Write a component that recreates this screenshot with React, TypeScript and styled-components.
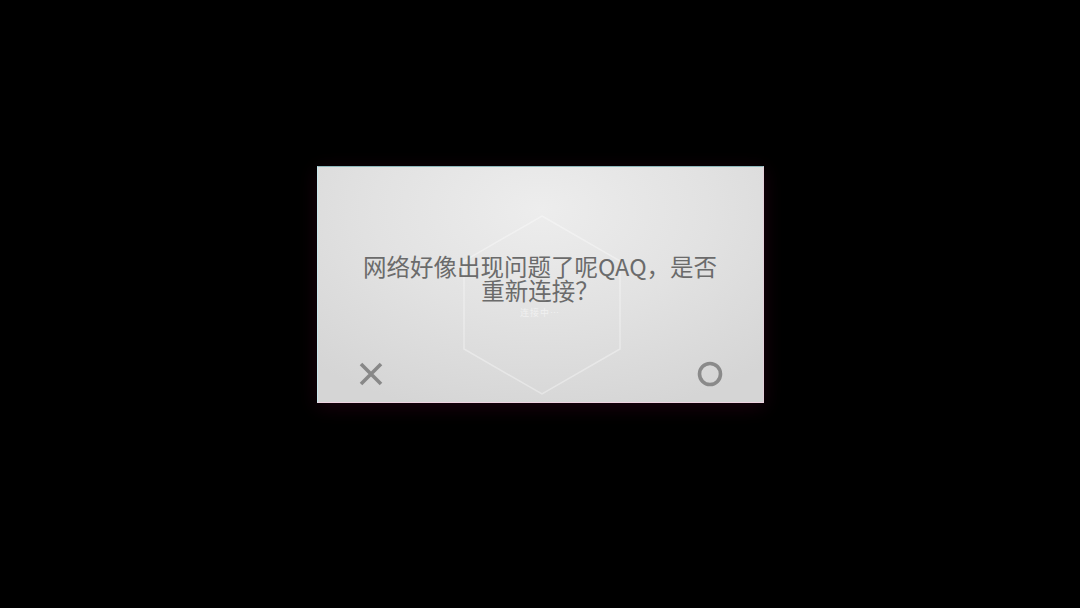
import React from 'react';
import styled, { createGlobalStyle } from 'styled-components';

const GlobalStyle = createGlobalStyle`
  html, body {
    margin: 0;
    padding: 0;
    background: #000000;
  }
  body {
    font-family: "Noto Sans CJK SC", "Noto Sans", sans-serif;
  }
`;

const Screen = styled.div`
  width: 1080px;
  height: 608px;
  background: #000000;
  display: flex;
  flex-direction: column;
  align-items: center;
  padding-top: 166px;
  box-sizing: border-box;
  overflow: hidden;
`;

const Dialog = styled.div`
  position: relative;
  width: 447px;
  height: 237px;
  box-sizing: border-box;
  display: flex;
  flex-direction: column;
  padding: 0 40px 15px 40px;
  background: radial-gradient(ellipse 75% 90% at 50% 18%, #ededed 0%, #e2e2e2 50%, #d5d5d5 100%);
  border-top: 1px solid #8fb8bc;
  border-left: 1px solid #c9e8ee;
  border-right: 1px solid #e4d0da;
  border-bottom: 1px solid #f0d4e2;
  box-shadow: 0 4px 18px rgba(80, 0, 40, 0.35);
`;

const Hexagon = styled.svg`
  position: absolute;
  left: 145px;
  top: 48px;
  width: 158px;
  height: 180px;
  pointer-events: none;
`;

const Message = styled.div`
  position: relative;
  flex: 1;
  display: flex;
  flex-direction: column;
  align-items: center;
  padding-top: 87px;
`;

const MessageText = styled.p`
  margin: 0;
  width: 370px;
  text-align: center;
  font-size: 23.5px;
  line-height: 24px;
  color: #6b6b6b;
`;

const Hint = styled.span`
  margin-top: 5px;
  font-size: 9px;
  line-height: 11px;
  color: #ffffff;
  opacity: 0.5;
  letter-spacing: 1px;
`;

const Actions = styled.div`
  position: relative;
  display: flex;
  justify-content: space-between;
  align-items: center;
`;

const ActionButton = styled.button`
  width: 26px;
  height: 26px;
  padding: 0;
  border: none;
  background: transparent;
  display: flex;
  align-items: center;
  justify-content: center;
  cursor: pointer;
`;

export default function App() {
  return (
    <>
      <GlobalStyle />
      <Screen>
        <Dialog>
          <Hexagon viewBox="0 0 158 180">
            <polygon
              points="79,1 157,46 157,134 79,179 1,134 1,46"
              fill="none"
              stroke="#ffffff"
              strokeOpacity="0.35"
              strokeWidth="1.5"
            />
          </Hexagon>
          <Message>
            <MessageText>网络好像出现问题了呢QAQ，是否重新连接？</MessageText>
            <Hint>连接中…</Hint>
          </Message>
          <Actions>
            <ActionButton aria-label="取消">
              <svg width="26" height="26" viewBox="0 0 26 26">
                <path d="M3 3 L23 23 M23 3 L3 23" stroke="#888888" strokeWidth="3.6" strokeLinecap="butt" />
              </svg>
            </ActionButton>
            <ActionButton aria-label="确定">
              <svg width="26" height="26" viewBox="0 0 26 26">
                <circle cx="13" cy="13" r="10.5" fill="none" stroke="#8a8a8a" strokeWidth="3.6" />
              </svg>
            </ActionButton>
          </Actions>
        </Dialog>
      </Screen>
    </>
  );
}
